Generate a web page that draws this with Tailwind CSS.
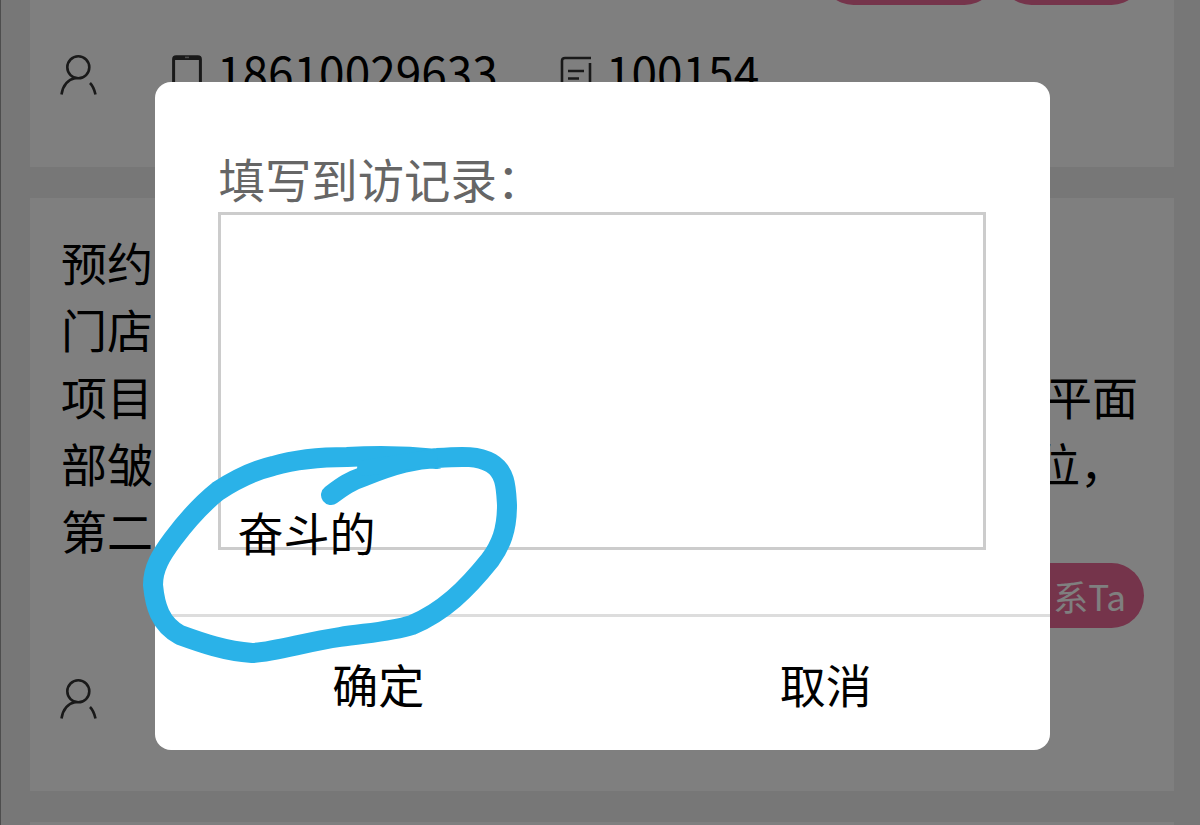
<!DOCTYPE html>
<html lang="zh-CN">
<head>
  <meta charset="UTF-8" />
  <meta name="viewport" content="width=device-width, initial-scale=1.0"/>
  <title>到访记录</title>
  <script src="https://cdn.jsdelivr.net/npm/@tailwindcss/browser@4"></script>
</head>
<body class="bg-[#eeeeee] font-['Noto_Sans_CJK_SC',sans-serif] text-black text-[46px] leading-[67px] h-screen overflow-hidden">
  <!-- List -->
  <div class="h-[825px] overflow-hidden border-l border-[#9a9a9a] pl-[29px] pr-[26px] flex flex-col gap-[31px]">
    <!-- Card 1 -->
    <section class="h-[167px] shrink-0 bg-white flex flex-col">
      <div class="h-[5px] shrink-0 overflow-hidden flex items-end justify-end gap-0.5 pr-[30px]">
        <span class="h-[65px] w-[176px] shrink-0 rounded-full bg-[#eb6896]"></span>
        <span class="h-[65px] w-[145px] shrink-0 rounded-full bg-[#eb6896]"></span>
      </div>
      <div class="mt-[33px] flex pl-[30px]">
        <svg class="mt-[16px] w-[38px] h-[42px] shrink-0" viewBox="0 0 38 42" fill="none" stroke="#333" stroke-width="2.6">
          <circle cx="18.3" cy="13.3" r="11"/>
          <path d="M1.5 40.5C3 31 8 25.5 15.5 24M30 29c3 3 4.5 7 5.5 11.5"/>
        </svg>
        <svg class="mt-[17px] ml-[74px] w-[30px] h-[42px] shrink-0" viewBox="0 0 30 42" fill="none" stroke="#333">
          <rect x="1.6" y="1.8" width="26.8" height="38" rx="2.5" stroke-width="3"/>
          <path d="M2 3h26" stroke-width="4"/>
          <path d="M13 2.4h4" stroke="#999" stroke-width="1.5"/>
        </svg>
        <span class="ml-[15px] w-[343px]">18610029633</span>
        <svg class="mt-[18px] w-[32px] h-[40px] shrink-0" viewBox="0 0 32 40" fill="none" stroke="#333" stroke-width="2.6">
          <path d="M31 2H5Q2 2 2 5v32h28V7M8 15h16M8 22.5h11"/>
        </svg>
        <span class="ml-[14px]">100154</span>
      </div>
    </section>

    <!-- Card 2 -->
    <section class="h-[593px] shrink-0 bg-white pt-[30px] pl-[31px] pr-[30px]">
      <p>预约</p>
      <p>门店</p>
      <p class="flex justify-between pr-[6px]"><span>项目</span><span>平面</span></p>
      <p class="flex justify-between pr-[18px]"><span>部皱</span><span>位，</span></p>
      <p>第二</p>
      <div class="flex justify-end">
        <span class="h-[65px] w-[176px] rounded-full bg-[#eb6896] text-white text-[35px] leading-[65px] text-right pr-[18px]"><span class="mr-1">联</span>系Ta</span>
      </div>
      <svg class="mt-[50px] -ml-px w-[38px] h-[42px]" viewBox="0 0 38 42" fill="none" stroke="#333" stroke-width="2.6">
        <circle cx="18.3" cy="13.3" r="11"/>
        <path d="M1.5 40.5C3 31 8 25.5 15.5 24M30 29c3 3 4.5 7 5.5 11.5"/>
      </svg>
    </section>

    <!-- Card 3 -->
    <section class="h-[100px] shrink-0 bg-white"></section>
  </div>

  <!-- Modal -->
  <div class="absolute inset-0 bg-black/50 flex items-start justify-center pt-[82px] pl-1">
    <div class="w-[895px] h-[667.5px] rounded-[16px] bg-white flex flex-col">
      <div class="h-[532px] shrink-0 px-[63px] pt-[62px]">
        <label class="block h-[68px] pl-px text-[46.4px] text-[#666]">填写到访记录：</label>
        <div class="h-[338px] w-[768px] border-3 border-[#ccc] flex items-end pl-[17px]">
          <span class="-mb-[18px]">奋斗的</span>
        </div>
      </div>
      <div class="flex-1 border-t-3 border-[#ddd] flex text-center leading-[132px]">
        <button class="flex-1">确定</button>
        <button class="flex-1">取消</button>
      </div>
    </div>
  </div>

  <!-- Hand-drawn mark -->
  <svg class="absolute inset-0 w-[1200px] h-[825px]" viewBox="0 0 1200 825" fill="none" stroke="#2ab2e8" stroke-width="20" stroke-linecap="round" stroke-linejoin="round">
    <path d="M331 495C343 486 350 481 365 476C395 464 415 459 437 458C465 456 478 456 491 463C506 472 506 488 507 505C507 530 501 545 490 560C466 590 443 612 412 625C390 632 365 633 340 637C305 642 275 652 252 653C225 651 202 643 180 635C160 624 155 606 153 585C153 568 161 555 173 539C188 519 203 503 218 491C238 478 256 470 273 466C297 459 320 457 347 457C380 455 410 456 437 459"/>
    <path d="M365 468L430 458" stroke-width="16"/>
  </svg>
</body>
</html>
